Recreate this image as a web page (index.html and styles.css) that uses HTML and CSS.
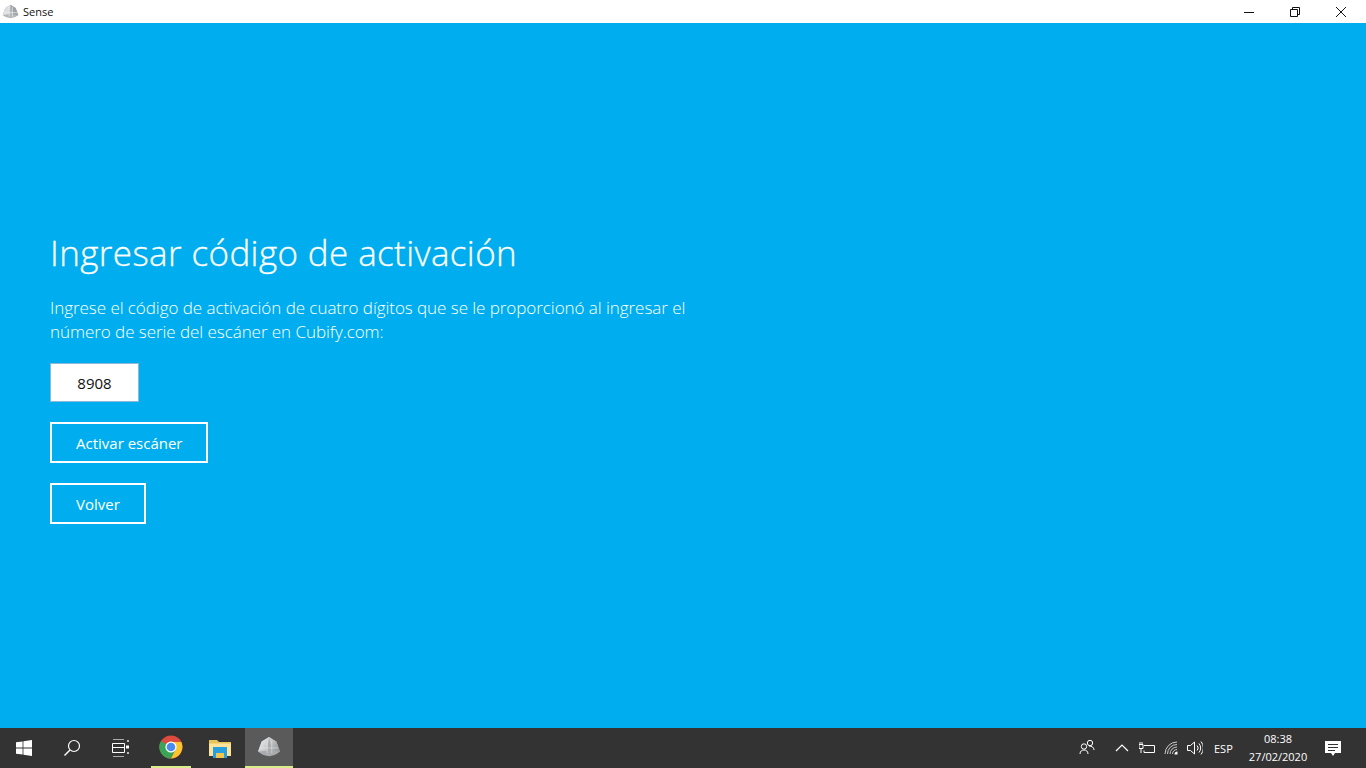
FILE: index.html
```html
<!DOCTYPE html>
<html lang="es">
<head>
<meta charset="utf-8">
<title>Sense</title>
<link rel="stylesheet" href="styles.css">
</head>
<body>
<div class="app">
  <header class="titlebar">
    <div class="title-left">
      <svg class="app-icon" width="17" height="16" viewBox="0 0 26 24"><path d="M13 1L21 6L25 17Q13 26 1 17L5 6Z" fill="#b4b7ba"/><path d="M13 1L11 15L1 17L5 6Z" fill="#dcdee0"/><path d="M13 1L16 15L25 17L21 6Z" fill="#9ea2a6"/><path d="M11 4V19M16 4V19M3 13H23" stroke="#eceded" fill="none"/></svg>
      <span class="app-name">Sense</span>
    </div>
    <div class="window-controls">
      <span class="win-btn"><svg width="12" height="12" viewBox="0 0 12 12"><path d="M1 6.500H11" stroke="#111" fill="none"/></svg></span>
      <span class="win-btn"><svg width="12" height="12" viewBox="0 0 12 12"><path d="M1.500 3.500H8.500V10.500H1.500ZM3.500 3.500V1.500H10.500V8.500H8.500" stroke="#111" fill="none"/></svg></span>
      <span class="win-btn"><svg width="12" height="12" viewBox="0 0 12 12"><path d="M1 1L11 11M11 1L1 11" stroke="#111" fill="none"/></svg></span>
    </div>
  </header>
  <main class="content">
    <h1 class="heading">Ingresar código de activación</h1>
    <p class="lead">Ingrese el código de activación de cuatro dígitos que se le proporcionó al ingresar el<br>número de serie del escáner en Cubify.com:</p>
    <div class="code-box">8908</div>
    <button class="btn btn-activate">Activar escáner</button>
    <button class="btn btn-back">Volver</button>
  </main>
  <footer class="taskbar">
    <div class="task-left">
      <span class="tb tb-48"><svg width="16" height="16" viewBox="0 0 16 16"><path d="M0 2.300L6.600 1.400V7.600H0ZM7.400 1.300L16 0V7.600H7.400ZM0 8.400H6.600V14.600L0 13.700ZM7.400 8.400H16V16L7.400 14.700Z" fill="#fff"/></svg></span>
      <span class="tb tb-48"><svg width="18" height="18" viewBox="0 0 18 18"><circle cx="11" cy="7" r="5.500" stroke="#fff" fill="none" stroke-width="1.200"/><path d="M7 11L1.500 16.500" stroke="#fff" stroke-width="1.500" fill="none"/></svg></span>
      <span class="tb tb-48"><svg width="17" height="18" viewBox="0 0 17 18"><path d="M1 0.500H12M1 17.500H12" stroke="#aaa" fill="none"/><path d="M0.500 4.500H12.500V13.500H0.500ZM0.500 8.500H12.500" stroke="#fff" fill="none"/><rect x="15" y="1" width="2" height="2" fill="#bbb"/><rect x="14" y="6.500" width="3" height="3" fill="#fff"/><rect x="15" y="13" width="2" height="2" fill="#bbb"/></svg></span>
      <span class="tb tb-chrome"><svg width="24" height="24" viewBox="0 0 24 24"><circle cx="12" cy="12" r="11.500" fill="#dd4b3e"/><path d="M12 12L2 6A11.500 11.500 0 0 0 12 23.500L17 14Z" fill="#3ba356"/><path d="M12 7H22.300A11.500 11.500 0 0 1 12 23.500L17 14Z" fill="#fbc52d"/><circle cx="12" cy="12" r="5.600" fill="#fff"/><circle cx="12" cy="12" r="4.300" fill="#4a8bf0"/></svg></span>
      <span class="tb tb-folder"><svg width="22" height="19" viewBox="0 0 22 19"><path d="M0 1H8L10 3H22V17H0Z" fill="#e9c45c"/><path d="M0 4.500H22V17H0Z" fill="#fde49a"/><path d="M4 8H18V19H15V14H7V19H4Z" fill="#27a0e0"/><rect x="7" y="14" width="8" height="5" fill="#f2c550"/></svg></span>
      <span class="tb tb-sense"><svg width="24" height="22" viewBox="0 0 26 24"><defs><linearGradient id="cubeLeft" x1="0" y1="0" x2="1" y2="1"><stop offset="0" stop-color="#f4f4f4"/><stop offset="1" stop-color="#b8babc"/></linearGradient><linearGradient id="cubeRight" x1="0" y1="0" x2="1" y2="1"><stop offset="0" stop-color="#d4d5d6"/><stop offset="1" stop-color="#8e9092"/></linearGradient></defs><path d="M13 1L21 6L25 17Q13 27 1 17L5 6Z" fill="#a9abad"/><path d="M13 1L11 16L1 17L5 6Z" fill="url(#cubeLeft)"/><path d="M13 1L16 16L25 17L21 6Z" fill="url(#cubeRight)"/><path d="M11 5V19M16 5V19M3 13H23" stroke="#f0f0f0" stroke-opacity="0.5" fill="none"/></svg></span>
    </div>
    <div class="tray">
      <span class="tray-people"><svg width="16" height="16" viewBox="0 0 16 16"><circle cx="5" cy="7.500" r="2.700" stroke="#fff" fill="none"/><circle cx="11" cy="4" r="2.700" stroke="#fff" fill="none"/><path d="M1 15C1 12 3 11 5 11S9 12 9 15M10 7C13 7 15 8.500 15 11" stroke="#fff" fill="none"/></svg></span>
      <span class="tray-chevron"><svg width="14" height="8" viewBox="0 0 14 8"><path d="M1 7L7 1L13 7" stroke="#fff" fill="none" stroke-width="1.200"/></svg></span>
      <span class="tray-power"><svg width="16" height="12" viewBox="0 0 16 12"><path d="M5 3.500H15.500V10.500H5M5 8.500V10.500" stroke="#fff" fill="none"/><path d="M0 2.500H4V6.500H0ZM1 0V2.500M3 0V2.500M2 6.500V11" stroke="#fff" fill="none"/></svg></span>
      <span class="tray-wifi"><svg width="14" height="14" viewBox="0 0 14 14"><path d="M1 13A12 12 0 0 1 13 1M3.500 13A9.500 9.500 0 0 1 13 3.500M6 13A7 7 0 0 1 13 6M8.500 13A4.500 4.500 0 0 1 13 8.500" stroke="#ccc" fill="none"/><path d="M10.500 13.500A3 3 0 0 1 13.500 10.500V13.500Z" fill="#fff"/></svg></span>
      <span class="tray-volume"><svg width="16" height="14" viewBox="0 0 16 14"><path d="M0.500 4.500H3.500L7.500 1V13L3.500 9.500H0.500Z" stroke="#fff" fill="none"/><path d="M10 4.500A3.500 3.500 0 0 1 10 9.500M12 2.500A7 7 0 0 1 12 11.500M14 0.500A10 10 0 0 1 14 13.500" stroke="#fff" fill="none"/></svg></span>
      <span class="tray-lang">ESP</span>
      <span class="tray-clock"><span>08:38</span><span>27/02/2020</span></span>
      <span class="tray-notify"><svg width="16" height="15" viewBox="0 0 16 15"><path d="M0 0H16V12H10L8 15L6 12H0Z" fill="#fff"/><path d="M3 3.500H13M3 6.500H13M3 9.500H10" stroke="#333"/></svg></span>
    </div>
  </footer>
</div>
</body>
</html>
```
FILE: styles.css
```css
* { box-sizing: border-box; }
html, body { margin: 0; height: 100%; overflow: hidden; }
body { font-family: "Open Sans", "Noto Sans", sans-serif; }
.app { width: 1366px; height: 768px; display: flex; flex-direction: column; }

.titlebar { height: 23px; background: #fff; display: flex; align-items: center; justify-content: space-between; }
.title-left { display: flex; align-items: center; padding-left: 2px; }
.app-name { font-size: 11px; color: #111; margin-left: 4px; }
.app-icon { display: block; }
.window-controls { display: flex; padding-right: 2px; }
.win-btn { width: 46px; height: 22px; display: flex; align-items: center; justify-content: center; }

.content { flex: 1; background: #00aeef; color: #fff; padding: 208px 0 0 50px; display: flex; flex-direction: column; align-items: flex-start; }
.heading { font-size: 35px; line-height: 44px; font-weight: 300; letter-spacing: 0.38px; -webkit-text-stroke: 0.3px #fff; margin: 0; }
.lead { font-size: 17px; line-height: 24px; font-weight: 300; letter-spacing: -0.05px; margin: 21px 0 0; }
.code-box { width: 89px; height: 39px; margin-top: 19px; background: #fff; border: 1px solid #8fb8d6; color: #111; font-size: 15px; display: flex; align-items: center; justify-content: center; }
.btn { font: inherit; font-size: 15px; color: #fff; background: transparent; border: 2px solid #fff; height: 41px; padding: 0 24px; margin: 0; display: block; text-align: left; white-space: nowrap; }
.btn-activate { margin-top: 20px; width: 158px; }
.btn-back { margin-top: 20px; width: 96px; }

.taskbar { height: 40px; background: #333; display: flex; justify-content: space-between; color: #fff; }
.task-left { display: flex; }
.tb { height: 40px; display: flex; align-items: center; justify-content: center; }
.tb-48 { width: 48px; }
.tb-chrome { width: 40px; margin-left: 7px; border-bottom: 2px solid #d8ec8c; }
.tb-folder { width: 54px; padding-left: 4px; }
.tb-sense { width: 48px; background: #5a5a5a; border-bottom: 2px solid #d8ec8c; }

.tray { display: flex; align-items: center; }
.tray-people { display: flex; margin-right: 20px; margin-top: -3px; }
.tray-chevron { display: flex; margin-right: 10px; }
.tray-power { display: flex; margin-right: 9px; }
.tray-wifi { display: flex; margin-right: 9px; }
.tray-volume { display: flex; margin-right: 11px; }
.tray-lang { font-size: 11px; width: 28px; }
.tray-clock { display: flex; flex-direction: column; align-items: center; font-size: 11px; line-height: 18px; width: 72px; }
.tray-notify { display: flex; margin: 0 25px 0 11px; }
```
